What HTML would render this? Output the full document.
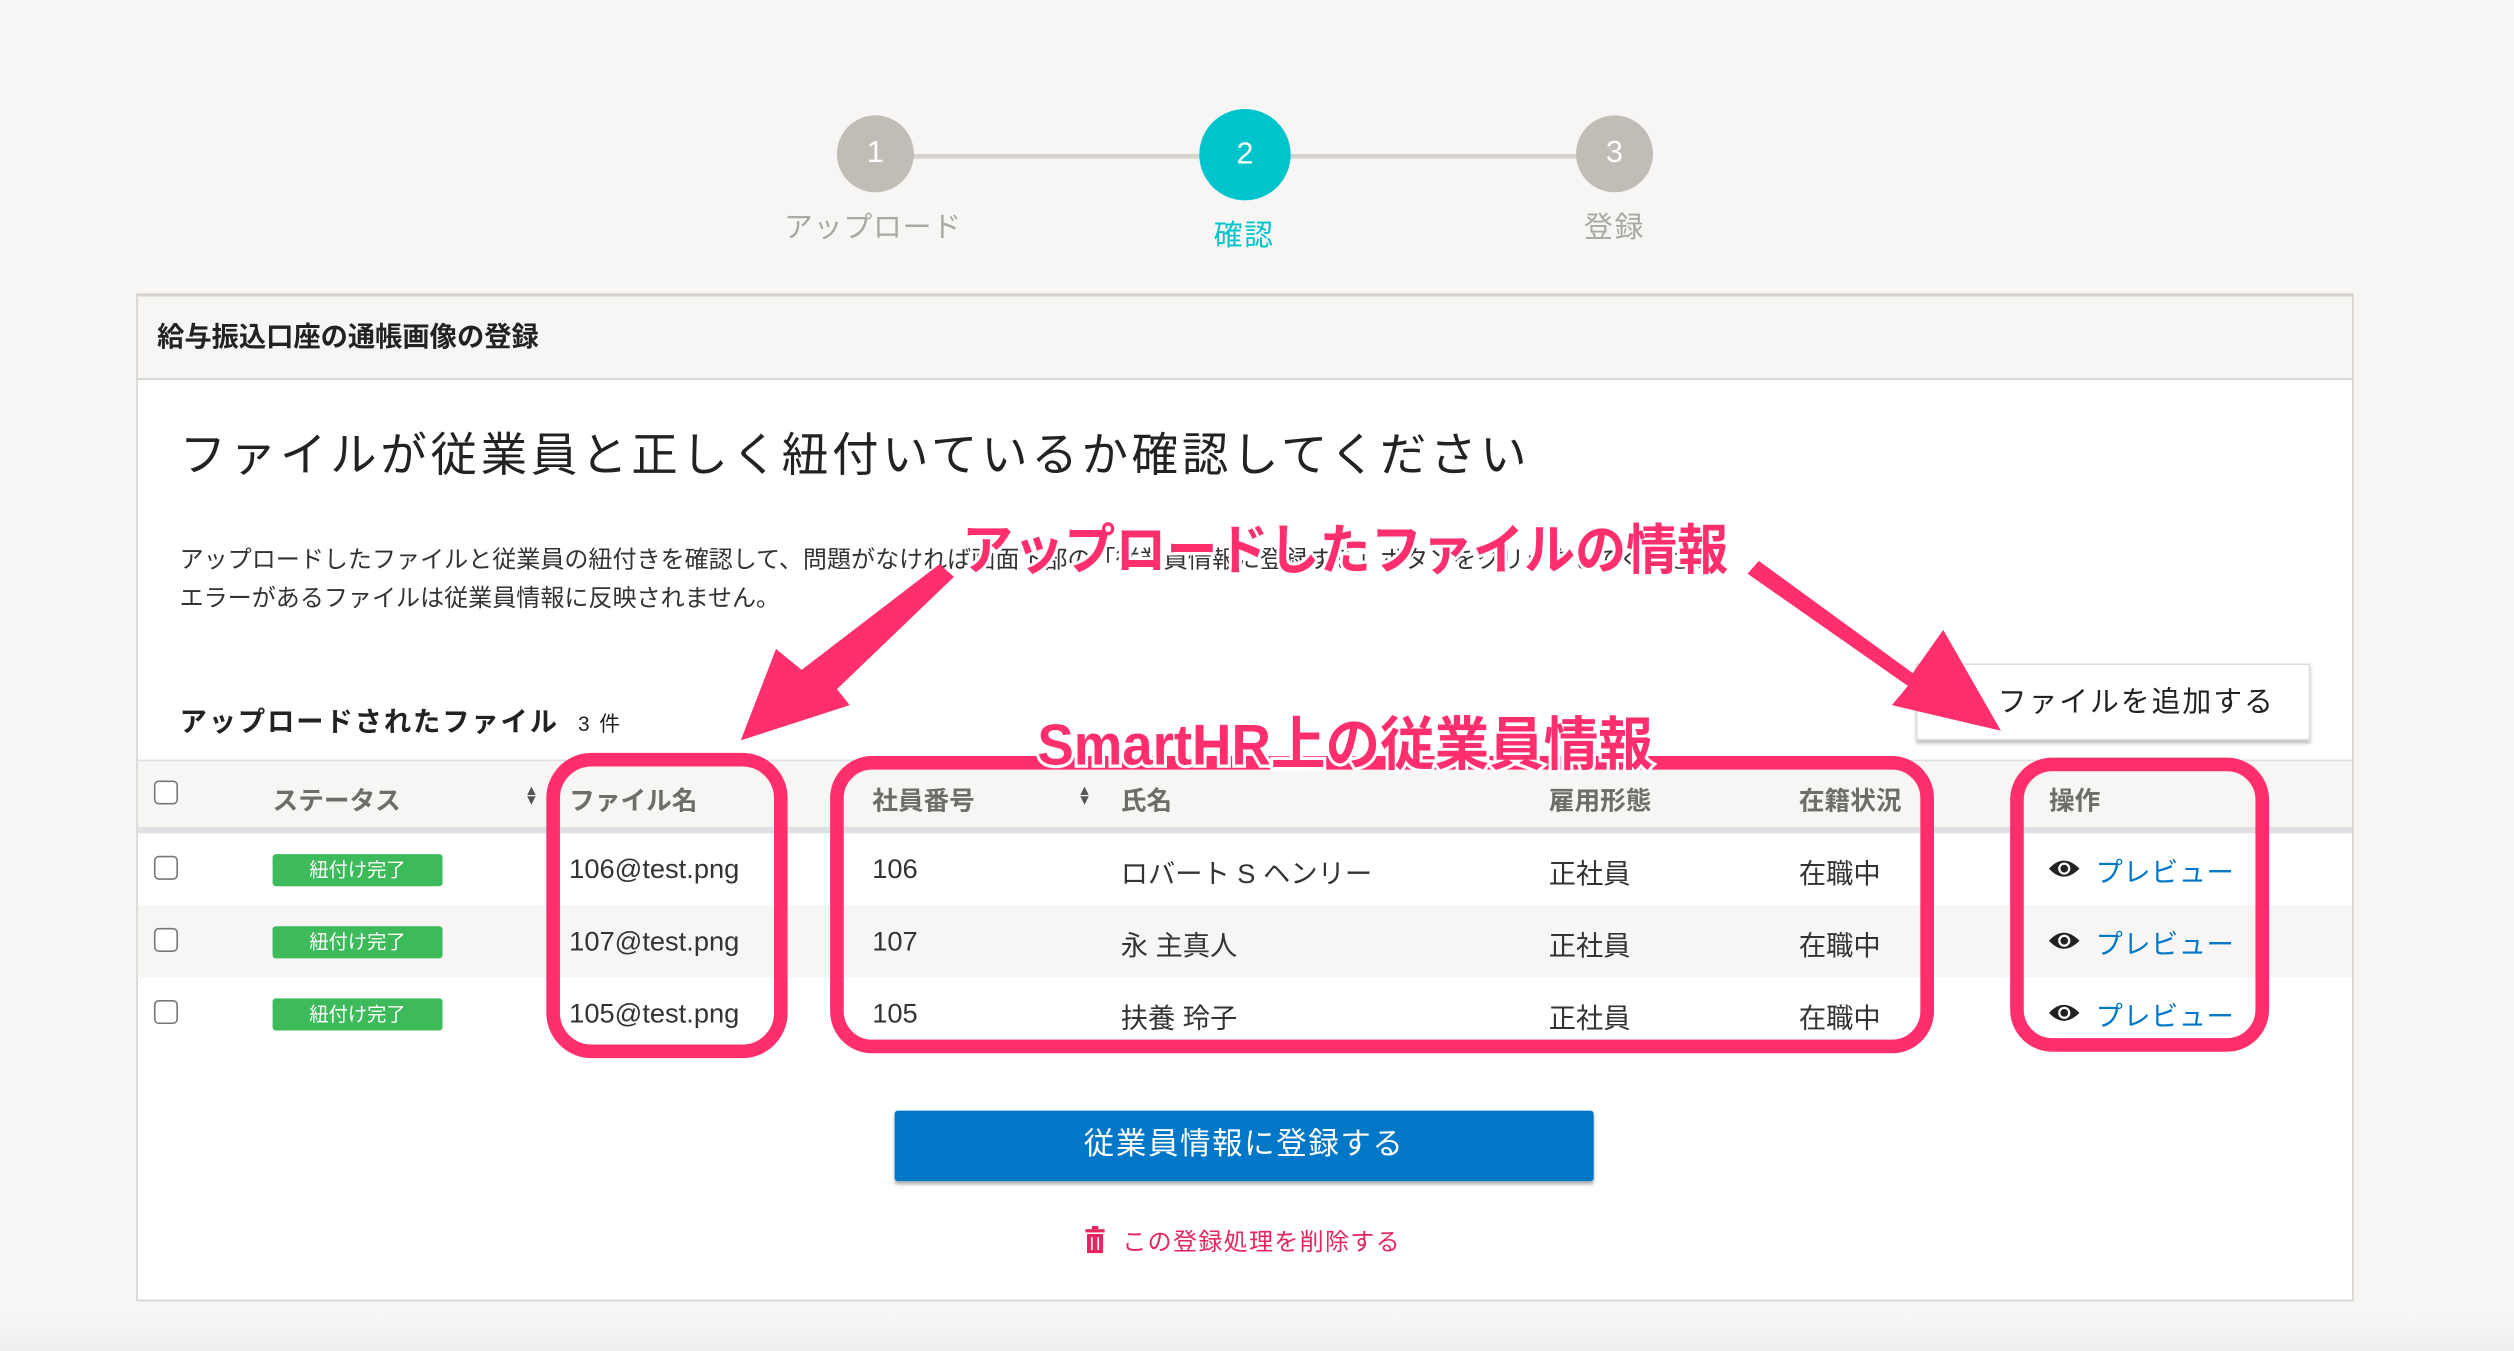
<!DOCTYPE html>
<html><head><meta charset="utf-8"><style>
*{margin:0;padding:0;box-sizing:border-box}
html,body{width:2514px;height:1351px;overflow:hidden;background:#f7f6f4}
#s{position:absolute;left:0;top:0;width:1568px;height:843px;transform:scale(1.6033,1.6026);transform-origin:0 0;font-family:"Liberation Sans","Noto Sans CJK JP",sans-serif;color:#333}
.a{position:absolute;white-space:nowrap}
.c{position:absolute;border-radius:50%;color:#fff;font-size:19px;display:flex;align-items:center;justify-content:center}
.th{position:absolute;top:486px;font-size:16px;font-weight:bold;color:#6f6d69;white-space:nowrap}
.td{position:absolute;font-size:17px;color:#333;white-space:nowrap}
.cb{position:absolute;left:96px;width:15px;height:15px;border:1px solid #777;border-radius:3px;background:#fff}
.bd{position:absolute;left:170px;width:106px;height:20px;background:#3dba5a;color:#fff;font-size:12px;text-align:center;line-height:20px;border-radius:2px}
.pv{position:absolute;font-size:17px;color:#0077c7;white-space:nowrap;letter-spacing:0.3px}
.sort{position:absolute;top:490px;font-size:9px;color:#555;line-height:6px}
</style></head><body><div id="s">
<div class="a" style="left:546px;top:96px;width:461px;height:3px;background:#d6d3ce"></div>
<div class="c" style="left:522px;top:72px;width:48px;height:48px;background:#c1bdb6">1</div>
<div class="c" style="left:748px;top:68px;width:57px;height:57px;background:#00c4cc">2</div>
<div class="c" style="left:983px;top:72px;width:48px;height:48px;background:#c1bdb6">3</div>
<div class="a" style="left:489px;top:128px;font-size:18px;color:#aaa8a4;letter-spacing:0.5px">アップロード</div>
<div class="a" style="left:757px;top:133px;font-size:18px;color:#00c4cc;letter-spacing:1px">確認</div>
<div class="a" style="left:988px;top:128px;font-size:18px;color:#aaa8a4;letter-spacing:1px">登録</div>

<div class="a" style="left:85px;top:183px;width:1383px;height:629px;background:#fff;border:1px solid #d6d3ce"></div>
<div class="a" style="left:85px;top:183px;width:1383px;height:54px;background:#f7f6f4;border:1px solid #d6d3ce;border-top-width:2px"></div>
<div class="a" style="left:98px;top:196px;font-size:17px;font-weight:bold;color:#222">給与振込口座の通帳画像の登録</div>
<div class="a" style="left:112px;top:261px;font-size:29px;color:#222;letter-spacing:2.3px">ファイルが従業員と正しく紐付いているか確認してください</div>
<div class="a" style="left:112px;top:338px;font-size:15px;color:#333">アップロードしたファイルと従業員の紐付きを確認して、問題がなければ画面下部の「従業員情報に登録する」ボタンをクリックしてください。</div>
<div class="a" style="left:112px;top:362px;font-size:15px;color:#333">エラーがあるファイルは従業員情報に反映されません。</div>
<div class="a" style="left:112px;top:436px;font-size:17px;font-weight:bold;color:#222;letter-spacing:1.2px">アップロードされたファイル <span style="font-size:13px;font-weight:normal;margin-left:6px">3 件</span></div>
<div class="a" style="left:1195px;top:414px;width:246px;height:48px;background:#fff;border:1px solid #ddd;box-shadow:0 2px 2px rgba(0,0,0,.25);font-size:18px;line-height:46px;padding-left:50px;color:#222;letter-spacing:1.2px">ファイルを追加する</div>

<div class="a" style="left:86px;top:474px;width:1381px;height:46px;background:#f7f6f4;border-top:1px solid #dfe0e3;border-bottom:4px solid #dfe0e3"></div>
<div class="a" style="left:86px;top:565px;width:1381px;height:45px;background:#f7f6f4"></div>
<div class="cb" style="top:487px"></div>
<div class="th" style="left:170px">ステータス</div><div class="sort" style="left:327px">▲<br>▼</div>
<div class="th" style="left:355px">ファイル名</div><div class="sort" style="left:516px">▲<br>▼</div>
<div class="th" style="left:544px">社員番号</div><div class="sort" style="left:672px">▲<br>▼</div>
<div class="th" style="left:699px">氏名</div>
<div class="th" style="left:966px">雇用形態</div>
<div class="th" style="left:1122px">在籍状況</div>
<div class="th" style="left:1278px">操作</div>

<div class="cb" style="top:534px"></div><div class="bd" style="top:533px">紐付け完了</div>
<div class="td" style="left:355px;top:533px">106@test.png</div><div class="td" style="left:544px;top:533px">106</div><div class="td" style="left:699px;top:531px">ロバート S ヘンリー</div><div class="td" style="left:966px;top:531px">正社員</div><div class="td" style="left:1122px;top:531px">在職中</div>
<div class="cb" style="top:579px"></div><div class="bd" style="top:578px">紐付け完了</div>
<div class="td" style="left:355px;top:578px">107@test.png</div><div class="td" style="left:544px;top:578px">107</div><div class="td" style="left:699px;top:576px">永 主真人</div><div class="td" style="left:966px;top:576px">正社員</div><div class="td" style="left:1122px;top:576px">在職中</div>
<div class="cb" style="top:624px"></div><div class="bd" style="top:623px">紐付け完了</div>
<div class="td" style="left:355px;top:623px">105@test.png</div><div class="td" style="left:544px;top:623px">105</div><div class="td" style="left:699px;top:621px">扶養 玲子</div><div class="td" style="left:966px;top:621px">正社員</div><div class="td" style="left:1122px;top:621px">在職中</div>

<svg class="a" style="left:0;top:0" width="1568" height="843">
<g id="eye"><path d="M1278 542 Q1287 532 1297 542 Q1287 552 1278 542Z" fill="#222"/><circle cx="1287.5" cy="542" r="3.8" fill="#fff"/><circle cx="1287.5" cy="542" r="2.4" fill="#222"/></g>
<use href="#eye" y="45"/><use href="#eye" y="90"/>
</svg>
<div class="pv" style="left:1307px;top:530px">プレビュー</div>
<div class="pv" style="left:1307px;top:575px">プレビュー</div>
<div class="pv" style="left:1307px;top:620px">プレビュー</div>

<div class="a" style="left:558px;top:693px;width:436px;height:44px;background:#0077c7;border-radius:2px;box-shadow:0 2px 2px rgba(0,0,0,.3);color:#fff;font-size:19px;text-align:center;line-height:44px;letter-spacing:1px">従業員情報に登録する</div>
<svg class="a" style="left:676px;top:765px" width="14" height="17"><rect x="1" y="2" width="12" height="2" fill="#e5265f"/><rect x="5" y="0" width="4" height="2" fill="#e5265f"/><rect x="2" y="5" width="10" height="12" fill="#e5265f"/><rect x="4.5" y="7" width="1" height="8" fill="#fff"/><rect x="8.5" y="7" width="1" height="8" fill="#fff"/></svg>
<div class="a" style="left:700px;top:764px;font-size:15px;color:#e5265f;letter-spacing:0.8px">この登録処理を削除する</div>

<div class="a" style="left:0;top:822px;width:1568px;height:21px;background:linear-gradient(#f7f6f4,#ededeb)"></div>

<svg class="a" style="left:0;top:0" width="1568" height="843">
<g fill="none" stroke="#ff2f6e" stroke-width="8.5">
<rect x="345" y="474" width="142" height="182" rx="24"/>
<rect x="522" y="476" width="680" height="177" rx="22"/>
<rect x="1258" y="477" width="153" height="175" rx="22"/>
</g>
<polygon points="586,352 595,360 522,430 530,440 462,462 484,405 500,418" fill="#ff2f6e"/>
<polygon points="1090,358 1097,350 1193,420 1212,393 1248,456 1180,440 1190,428" fill="#ff2f6e"/>
<g font-family="Liberation Sans,Noto Sans CJK JP,sans-serif" font-weight="bold" fill="#ff2f6e" stroke="#fff" stroke-width="4" paint-order="stroke" text-anchor="middle">
<text x="839" y="355" font-size="34" textLength="478" lengthAdjust="spacingAndGlyphs">アップロードしたファイルの情報</text>
<text x="839" y="477" font-size="36" textLength="384" lengthAdjust="spacingAndGlyphs">SmartHR上の従業員情報</text>
</g>
</svg>
</div></body></html>
